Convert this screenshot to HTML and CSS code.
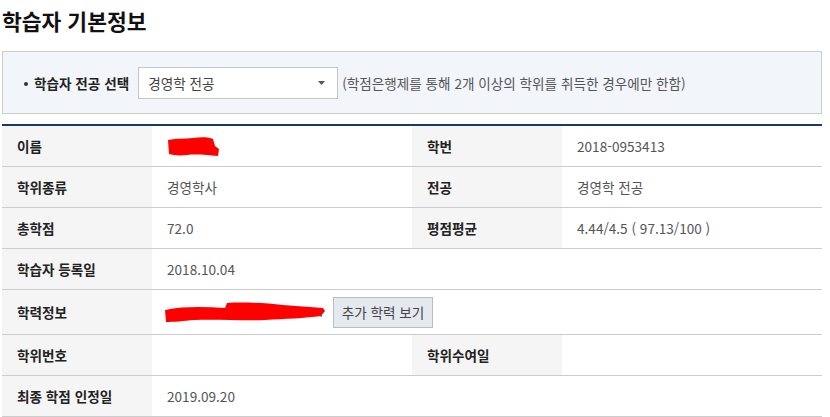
FILE: index.html
```html
<!DOCTYPE html>
<html lang="ko">
<head>
<meta charset="utf-8">
<link rel="stylesheet" href="styles.css">
</head>
<body>
<div class="page">
  <h2 class="title">학습자 기본정보</h2>
  <div class="filter">
    <span class="filter-label">학습자 전공 선택</span>
    <div class="select">
      <span>경영학 전공</span>
      <svg class="caret" width="7" height="4" viewBox="0 0 7 4"><path d="M0 0H7L3.5 4Z" fill="#555"/></svg>
    </div>
    <span class="note">(학점은행제를 통해 2개 이상의 학위를 취득한 경우에만 한함)</span>
  </div>
  <div class="info">
    <div class="lab">이름</div>
    <div class="val"><svg class="redact" width="54" height="22" viewBox="0 0 54 22"><path d="M1 4C10 2 18 3 26 2C34 1 42 1 46 3L48 10L52 13L51 20C40 19 30 18 20 19C12 20 6 19 2 18Z" fill="#ff0000"/></svg></div>
    <div class="lab">학번</div>
    <div class="val">2018-0953413</div>

    <div class="lab">학위종류</div>
    <div class="val">경영학사</div>
    <div class="lab">전공</div>
    <div class="val">경영학 전공</div>

    <div class="lab">총학점</div>
    <div class="val">72.0</div>
    <div class="lab">평점평균</div>
    <div class="val">4.44/4.5 ( 97.13/100 )</div>

    <div class="lab">학습자 등록일</div>
    <div class="val wide">2018.10.04</div>

    <div class="lab tall">학력정보</div>
    <div class="val wide tall">
      <svg class="redact2" width="162" height="24" viewBox="0 0 162 24"><path d="M0 10C20 6 40 7 60 8L62 3C80 2 100 3 118 5C130 6 145 7 158 8L160 11L156 16C140 18 120 19 100 20C80 21 50 19 30 20C18 21 8 22 1 22Z" fill="#ff0000"/><path d="M157 12L156 17" stroke="#556" stroke-width="1"/></svg>
      <button class="btn">추가 학력 보기</button>
    </div>

    <div class="lab">학위번호</div>
    <div class="val"></div>
    <div class="lab">학위수여일</div>
    <div class="val"></div>

    <div class="lab">최종 학점 인정일</div>
    <div class="val wide">2019.09.20</div>
  </div>
</div>
</body>
</html>
```

FILE: styles.css
```css
html, body {
  margin: 0;
  padding: 0;
  background: #ffffff;
}
body {
  font-family: "Noto Sans CJK KR", "Noto Sans", sans-serif;
  color: #222;
}
.page {
  padding: 0 8px 0 2px;
}
.title {
  margin: 0;
  padding-top: 6px;
  height: 51px;
  box-sizing: border-box;
  font-size: 21.5px;
  font-weight: 700;
  line-height: 30px;
  color: #111;
}
.filter {
  box-sizing: border-box;
  width: 820px;
  height: 63px;
  border: 1px solid #cccccc;
  background: #f2f6fa;
  display: flex;
  align-items: center;
  padding-left: 20px;
  font-size: 13.6px;
}
.filter-label {
  font-weight: 700;
  color: #222;
  position: relative;
  padding-left: 11px;
  margin-right: 9px;
}
.filter-label::before {
  content: "";
  position: absolute;
  left: 1px;
  top: 9px;
  width: 4px;
  height: 4px;
  border-radius: 50%;
  background: #333;
}
.select {
  box-sizing: border-box;
  width: 200px;
  height: 32px;
  border: 1px solid #c4c4c4;
  background: #fff;
  display: flex;
  align-items: center;
  justify-content: space-between;
  padding: 0 12px 0 9px;
  color: #444;
}
.caret {
  display: block;
}
.note {
  margin-left: 4px;
  color: #555;
}
.info {
  margin-top: 10px;
  width: 820px;
  border-top: 2px solid #173a6a;
  display: grid;
  grid-template-columns: 150px 260px 150px 260px;
  font-size: 13.6px;
}
.lab, .val {
  box-sizing: border-box;
  height: 41px;
  padding: 0 15px;
  border-bottom: 1px solid #cccccc;
  display: flex;
  align-items: center;
}
.lab {
  background: #f5f5f5;
  font-weight: 700;
  color: #222;
}
.val {
  color: #555;
}
.wide { grid-column: span 3; }
.lab.tall, .val.tall { height: 45px; }
.redact { display: block; margin-top: 1px; }
.redact2 { display: block; margin-left: -2px; margin-right: 6px; }
.btn {
  box-sizing: border-box;
  width: 100px;
  height: 31px;
  border: 1px solid #b8bcc4;
  background: #e4e8ef;
  color: #444;
  font-family: "Noto Sans CJK KR", "Noto Sans", sans-serif;
  font-size: 13.6px;
  padding: 0;
}
```
